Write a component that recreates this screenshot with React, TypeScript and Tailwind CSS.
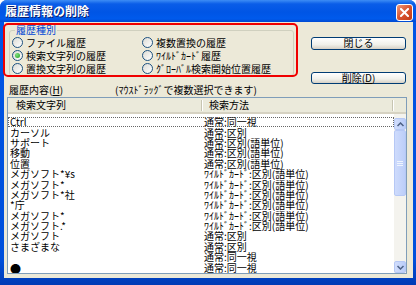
import { ReactNode } from 'react';

const rows: [string, string][] = [
  ['Ctrl', '通常:同一視'],
  ['カーソル', '通常:区別'],
  ['サポート', '通常:区別(語単位)'],
  ['移動', '通常:区別(語単位)'],
  ['位置', '通常:区別(語単位)'],
  ['メガソフト*¥s', 'ﾜｲﾙﾄﾞｶｰﾄﾞ:区別(語単位)'],
  ['メガソフト*', 'ﾜｲﾙﾄﾞｶｰﾄﾞ:区別(語単位)'],
  ['メガソフト*社', 'ﾜｲﾙﾄﾞｶｰﾄﾞ:区別(語単位)'],
  ['*庁', 'ﾜｲﾙﾄﾞｶｰﾄﾞ:区別(語単位)'],
  ['メガソフト*', 'ﾜｲﾙﾄﾞｶｰﾄﾞ:区別(語単位)'],
  ['メガソフト.*', 'ﾜｲﾙﾄﾞｶｰﾄﾞ:区別(語単位)'],
  ['メガソフト', '通常:区別'],
  ['さまざまな', '通常:区別'],
  ['', '通常:同一視'],
  ['●', '通常:同一視'],
];

const kinds = [
  { label: 'ファイル履歴', checked: false },
  { label: '複数置換の履歴', checked: false },
  { label: '検索文字列の履歴', checked: true },
  { label: 'ﾜｲﾙﾄﾞｶｰﾄﾞ履歴', checked: false },
  { label: '置換文字列の履歴', checked: false },
  { label: 'ｸﾞﾛｰﾊﾞﾙ検索開始位置履歴', checked: false },
];

const Radio = ({ label, checked }: { label: string; checked: boolean }) => (
  <div className="flex items-center h-[13px]">
    <span className="w-[11px] h-[11px] rounded-full border border-[#1C5180] bg-[linear-gradient(135deg,#DCDBD5,#FFFFFF)] flex items-center justify-center shrink-0">
      {checked && <span className="w-[5px] h-[5px] rounded-full bg-[radial-gradient(circle_at_35%_35%,#7FE07F,#21A121)]" />}
    </span>
    <span className="ml-[3px] text-[10px] leading-[12px] text-black whitespace-nowrap">{label}</span>
  </div>
);

const XpButton = ({ children, className }: { children: ReactNode; className: string }) => (
  <div className={`w-[95px] rounded-[3px] border border-[#003C74] bg-[linear-gradient(to_bottom,#FFFFFF,#F0F0EA_60%,#D6D0C5)] flex items-center justify-center text-[10px] leading-[10px] text-black ${className}`}>
    {children}
  </div>
);

const ScrollArrow = ({ up }: { up: boolean }) => (
  <div className="h-[12px] rounded-[2px] border border-[#B6C8F5] bg-[linear-gradient(to_right,#D2DEFC,#B9CCF9)] flex items-center justify-center">
    <svg width="7" height="5" viewBox="0 0 7 5">
      <path d={up ? 'M0.5 4 L3.5 1 L6.5 4' : 'M0.5 1 L3.5 4 L6.5 1'} fill="none" stroke="#4D6185" strokeWidth="1.5" />
    </svg>
  </div>
);

export default function App() {
  return (
    <div className="w-[416px] h-[285px] flex flex-col bg-[#0053E1] rounded-t-[7px] overflow-hidden font-['Noto_Sans_CJK_JP',sans-serif]">
      {/* Title bar */}
      <div className="h-[22px] shrink-0 flex items-center justify-between pl-[5px] pr-[3px] bg-[linear-gradient(to_bottom,#3D8DF5_0%,#0A5DE8_18%,#0055E5_55%,#005AEC_85%,#004AD2_100%)]">
        <span className="text-white text-[12px] font-bold leading-[14px] [text-shadow:1px_1px_0_#0A1E6E]">履歴情報の削除</span>
        <div className="w-[17px] h-[17px] mt-[2px] rounded-[3px] border border-white bg-[linear-gradient(135deg,#F09A7C,#D8532F_50%,#C23A16)] flex items-center justify-center">
          <svg width="9" height="9" viewBox="0 0 9 9">
            <path d="M1 1 L8 8 M8 1 L1 8" stroke="white" strokeWidth="2" strokeLinecap="square" />
          </svg>
        </div>
      </div>

      {/* Frame + client */}
      <div className="flex-1 flex pl-[4px] pr-[3px] pb-[7px] bg-[linear-gradient(to_bottom,#0055E5,#0050DC_90%,#003BB5)]">
        <div className="flex-1 relative bg-[#ECE9D8] flex flex-col">
          {/* Top section */}
          <div className="h-[62px] flex">
            <fieldset className="ml-[5px] mt-[2px] w-[285px] h-[52px] border border-[#D0D0BF] rounded-[3px] pl-[2px]">
              <legend className="ml-[3px] px-[1px] text-[10px] leading-[12px] text-[#0046D5]">履歴種別</legend>
              <div className="grid grid-cols-[130px_1fr]">
                {kinds.map((k, i) => (
                  <Radio key={i} label={k.label} checked={k.checked} />
                ))}
              </div>
            </fieldset>
            <div className="ml-[17px] flex flex-col">
              <XpButton className="mt-[15px] h-[14px]">閉じる</XpButton>
              <XpButton className="mt-[22px] h-[13px]">
                削除(<span className="underline">D</span>)
              </XpButton>
            </div>
          </div>

          {/* Red highlight annotation */}
          <div className="absolute left-[-1px] top-[1px] w-[295px] h-[54px] border-2 border-[#F00000] rounded-[5px] pointer-events-none" />

          {/* Labels */}
          <div className="h-[12px] flex items-center text-[10px] leading-[12px] text-black">
            <span className="pl-[5px] w-[111px]">
              履歴内容(<span className="underline">H</span>)
            </span>
            <span>(ﾏｳｽﾄﾞﾗｯｸﾞで複数選択できます)</span>
          </div>

          {/* List view */}
          <div className="mt-[1px] ml-[3px] w-[400px] h-[177px] border border-[#7F9DB9] bg-white flex flex-col">
            <div className="h-[16px] shrink-0 flex items-center bg-[#EBEADB] border-b-2 border-[#D6D2C2] text-[10px] leading-[12px] text-black">
              <div className="w-[193px] pl-[8px]">検索文字列</div>
              <div className="w-px h-[11px] bg-[#C7C5B2] shadow-[1px_0_0_#FFFFFF]" />
              <div className="w-[190px] pl-[7px]">検索方法</div>
              <div className="w-px h-[11px] bg-[#C7C5B2] shadow-[1px_0_0_#FFFFFF]" />
            </div>
            <div className="flex-1 flex overflow-hidden">
              <div className="flex-1 pt-[3px] overflow-hidden">
                {rows.map((r, i) => (
                  <div
                    key={i}
                    className={`h-[10.4px] flex items-center text-[10px] leading-[10px] text-black whitespace-nowrap ${i === 0 ? 'outline-1 outline-dotted outline-[#666] -outline-offset-1' : ''}`}
                  >
                    <div className={`w-[196px] pl-[2px] ${r[0] === '●' ? 'text-[11px]' : ''}`}>{r[0]}</div>
                    <div>{r[1]}</div>
                  </div>
                ))}
              </div>
              <div className="w-[12px] flex flex-col bg-[#F4F3EE] pt-[4px]">
                <ScrollArrow up />
                <div className="h-[66px] rounded-[2px] border border-[#B6C8F5] bg-[linear-gradient(to_right,#CEDBFC,#BCCEF9)] flex flex-col items-center justify-center gap-[1px]">
                  <div className="w-[6px] h-px bg-[#EEF4FE]" />
                  <div className="w-[6px] h-px bg-[#EEF4FE]" />
                  <div className="w-[6px] h-px bg-[#EEF4FE]" />
                </div>
                <div className="flex-1" />
                <ScrollArrow up={false} />
              </div>
            </div>
          </div>
        </div>
      </div>
    </div>
  );
}
